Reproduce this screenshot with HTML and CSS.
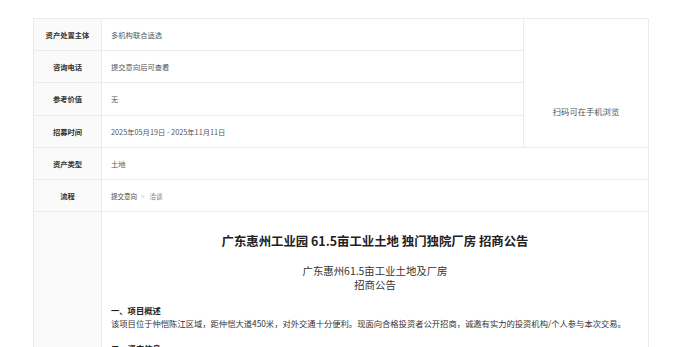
FILE: index.html
```html
<!DOCTYPE html>
<html lang="zh-CN">
<head>
<meta charset="utf-8">
<title>招商公告</title>
<link rel="stylesheet" href="styles.css">
</head>
<body>
<div class="page">
  <div class="grid">
    <div class="label r1">资产处置主体</div>
    <div class="value r1">多机构联合适选</div>
    <div class="qr">
      <div class="qr-img"></div>
      <div class="qr-text">扫码可在手机浏览</div>
    </div>
    <div class="label r2">咨询电话</div>
    <div class="value r2">提交意向后可查看</div>
    <div class="label r3">参考价值</div>
    <div class="value r3">无</div>
    <div class="label r4">招募时间</div>
    <div class="value r4">2025年05月19日 - 2025年11月11日</div>
    <div class="label r5">资产类型</div>
    <div class="value wide r5">土地</div>
    <div class="label r6">流程</div>
    <div class="value wide r6">
      <span class="step">提交意向</span>
      <span class="chev">&gt;</span>
      <span class="step muted">洽谈</span>
    </div>
    <div class="label r7"></div>
    <div class="content r7">
      <h1 class="title">广东惠州工业园 61.5亩工业土地 独门独院厂房 招商公告</h1>
      <p class="subtitle">广东惠州61.5亩工业土地及厂房<br>招商公告</p>
      <h2 class="sec">一、项目概述</h2>
      <p class="para">该项目位于仲恺陈江区域，距仲恺大道450米，对外交通十分便利。现面向合格投资者公开招商，诚邀有实力的投资机构/个人参与本次交易。</p>
      <h2 class="sec">二、资产信息</h2>
    </div>
  </div>
</div>
</body>
</html>
```

FILE: styles.css
```css
* { box-sizing: border-box; }
html, body { margin: 0; padding: 0; background: #fff; }
body {
  font-family: "Noto Sans CJK SC", "Noto Sans", sans-serif;
  color: #333;
  width: 698px;
  height: 347px;
  overflow: hidden;
}
.page {
  padding: 18px 0 0 33px;
}
.grid {
  display: grid;
  width: 616px;
  grid-template-columns: 67px 421px 124px;
  grid-template-rows: 31px 31px 32px 31px 31px 31px 160px;
  gap: 1px;
  padding: 1px;
  background: #ebebeb;
}
.label {
  background: #fafafa;
  display: flex;
  align-items: center;
  justify-content: center;
  font-size: 7.3px;
  font-weight: bold;
  color: #333;
  grid-column: 1;
}
.value {
  background: #fff;
  display: flex;
  align-items: center;
  padding-left: 9px;
  font-size: 7.3px;
  color: #555;
  grid-column: 2;
}
.value.wide { grid-column: 2 / 4; }
.r1 { grid-row: 1; }
.r2 { grid-row: 2; }
.r3 { grid-row: 3; }
.r4 { grid-row: 4; }
.r5 { grid-row: 5; }
.r6 { grid-row: 6; }
.r7 { grid-row: 7; }
.qr {
  grid-column: 3;
  grid-row: 1 / 5;
  background: #fff;
  display: flex;
  flex-direction: column;
  align-items: center;
  justify-content: center;
}
.qr-img { height: 55px; }
.qr-text {
  font-size: 8.3px;
  line-height: 12px;
  color: #555;
}
.step { font-size: 6.5px; color: #444; }
.step.muted { color: #777; }
.chev {
  font-size: 6.5px;
  color: #c8c8c8;
  margin: 0 5px 0 4px;
}
.content {
  grid-column: 2 / 4;
  background: #fff;
  padding: 20px 9px 0 9px;
  overflow: hidden;
}
.title {
  margin: 0;
  text-align: center;
  font-size: 12.4px;
  line-height: 18px;
  font-weight: bold;
  color: #222;
}
.subtitle {
  margin: 13.5px 0 0;
  text-align: center;
  font-size: 10.4px;
  line-height: 14px;
  color: #333;
}
.sec {
  margin: 12px 0 0;
  font-size: 8.3px;
  line-height: 13px;
  font-weight: bold;
  color: #222;
}
.para {
  margin: 0;
  font-size: 8.3px;
  line-height: 13px;
  color: #333;
}
```
